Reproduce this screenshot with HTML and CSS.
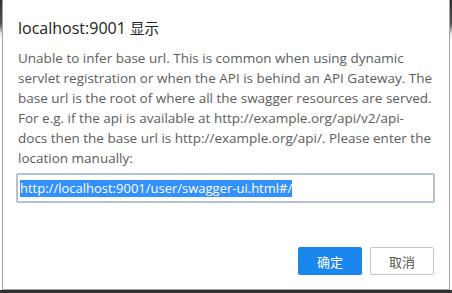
FILE: index.html
```html
<!DOCTYPE html>
<html lang="zh-CN">
<head>
  <meta charset="UTF-8" />
  <title>localhost:9001 显示</title>
  <link rel="stylesheet" href="styles.css">
</head>
<body>

  <!-- Ventana de aviso del navegador -->
  <div class="dialog">
    <h1 class="title">localhost:9001 <span class="cjk">显示</span></h1>
    <p class="message">Unable to infer base url. This is common when using dynamic<br>
      servlet registration or when the API is behind an API Gateway. The<br>
      base url is the root of where all the swagger resources are served.<br>
      For e.g. if the api is available at http://example.org/api/v2/api-<br>
      docs then the base url is http://example.org/api/. Please enter the<br>
      location manually:</p>

    <div class="field">
      <span class="selected">http://localhost:9001/user/swagger-ui.html#/</span>
    </div>

    <div class="actions">
      <button class="btn primary">确定</button>
      <button class="btn">取消</button>
    </div>
  </div>

</body>
</html>
```

FILE: styles.css
```css
body {
  margin: 0;
  padding: 0;
  font-family: 'Open Sans', 'Noto Sans CJK SC', sans-serif;
  background: linear-gradient(to bottom, #2e2e2e 0, #555 24px, #e6e6e6 34px, #fff 40px);
  overflow: hidden;
}

.dialog {
  margin: 0 2px;
  height: 290px;
  box-sizing: border-box;
  border: 1px solid #a4a4a4;
  border-top: none;
  background-color: #fff;
  padding: 0 14px 0 13px;
  display: flex;
  flex-direction: column;
}

.title {
  margin: 17px 0 0 2px;
  font-size: 16px;
  font-weight: normal;
  line-height: 22px;
  color: #222;
}

.title .cjk {
  font-family: 'Noto Sans CJK SC', sans-serif;
  font-size: 14.5px;
}

.message {
  margin: 9px -6px 0 2px;
  font-size: 13.5px;
  line-height: 20px;
  color: #5c5c5c;
}

.field {
  margin-top: 5px;
  height: 30px;
  box-sizing: border-box;
  border: 2px solid #b3c2d2;
  border-radius: 2px;
  padding: 0 2px;
  display: flex;
  align-items: center;
  font-size: 13px;
}

.selected {
  background-color: #3390ff;
  color: #fff;
  line-height: 17px;
}

.actions {
  margin-top: 44px;
  display: flex;
  justify-content: flex-end;
  gap: 8px;
  padding-right: 1px;
}

.btn {
  width: 64px;
  height: 28px;
  font-family: 'Noto Sans CJK SC', sans-serif;
  font-size: 13px;
  border-radius: 2px;
  border: 1px solid #c6c6c6;
  background-color: #fff;
  color: #555;
  padding: 0;
}

.btn.primary {
  background-color: #1a87ef;
  border-color: #1a87ef;
  color: #fff;
}
```
